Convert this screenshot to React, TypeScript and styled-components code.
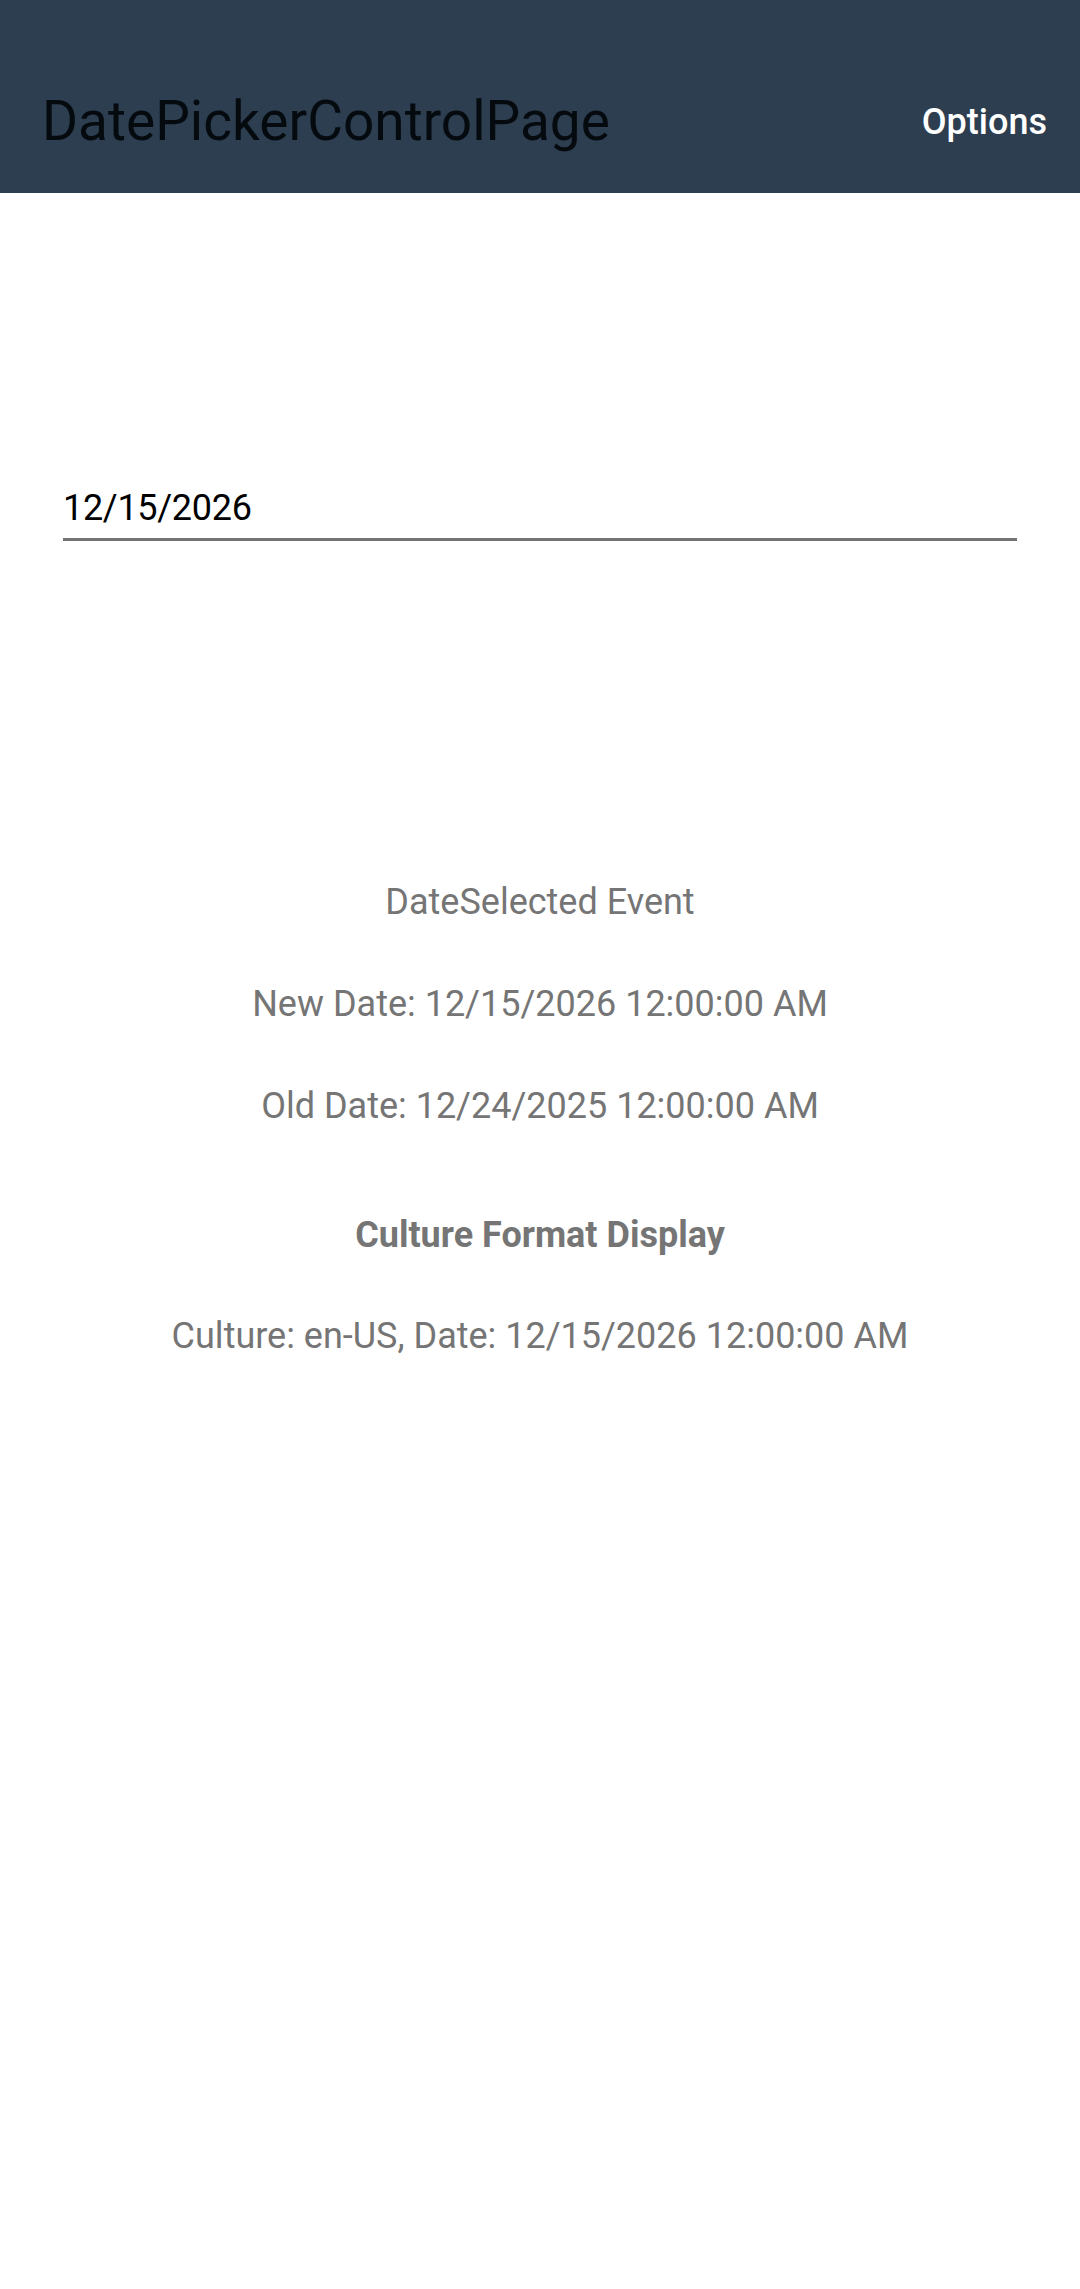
import React from 'react';
import styled, { createGlobalStyle } from 'styled-components';

const GlobalStyle = createGlobalStyle`
    html, body {
        margin: 0;
        padding: 0;
        background: #ffffff;
        font-family: Roboto, "Noto Sans", "Liberation Sans", sans-serif;
    }
    #root {
        min-height: 2289px;
        background: #ffffff;
    }
`;

const App: React.FC = () => {
    return (
        <>
            <GlobalStyle />
            <Page>
                <Toolbar>
                    <Title>DatePickerControlPage</Title>
                    <ToolbarItem>Options</ToolbarItem>
                </Toolbar>
                <Content>
                    <DateEntry type="text" value="12/15/2026" readOnly />
                    <Results>
                        <Label $gap={339}>DateSelected Event</Label>
                        <Label $gap={58}>New Date: 12/15/2026 12:00:00 AM</Label>
                        <Label $gap={58}>Old Date: 12/24/2025 12:00:00 AM</Label>
                        <Label $gap={85} $bold>
                            Culture Format Display
                        </Label>
                        <Label $gap={57}>
                            Culture: en-US, Date: 12/15/2026 12:00:00 AM
                        </Label>
                    </Results>
                </Content>
            </Page>
        </>
    );
};

export default App;

const Page = styled.div`
    width: 1080px;
    min-height: 2289px;
    display: flex;
    flex-direction: column;
`;

const Toolbar = styled.header`
    height: 193px;
    box-sizing: border-box;
    padding: 50px 33px 0 42px;
    background: #2c3e50;
    display: flex;
    align-items: center;
    justify-content: space-between;
`;

const Title = styled.h1`
    margin: 0;
    font-size: 55px;
    font-weight: 400;
    line-height: 1;
    color: #050a0f;
`;

const ToolbarItem = styled.span`
    font-size: 36px;
    font-weight: 500;
    line-height: 1;
    color: #ffffff;
`;

const Content = styled.main`
    display: flex;
    flex-direction: column;
    padding: 293px 63px 0;
`;

const DateEntry = styled.input`
    display: block;
    height: 44px;
    padding: 0 0 8px;
    margin: 0;
    border: none;
    border-bottom: 3px solid #737373;
    outline: none;
    background: transparent;
    font-family: Roboto, "Noto Sans", sans-serif;
    font-size: 36px;
    letter-spacing: -0.3px;
    line-height: 44px;
    color: #000000;
`;

const Results = styled.section`
    display: flex;
    flex-direction: column;
    align-items: center;
`;

const Label = styled.p<{ $gap: number; $bold?: boolean }>`
    margin: ${(p) => p.$gap}px 0 0;
    font-size: 36px;
    line-height: 44px;
    font-weight: ${(p) => (p.$bold ? 700 : 400)};
    color: #757575;
    text-align: center;
`;
